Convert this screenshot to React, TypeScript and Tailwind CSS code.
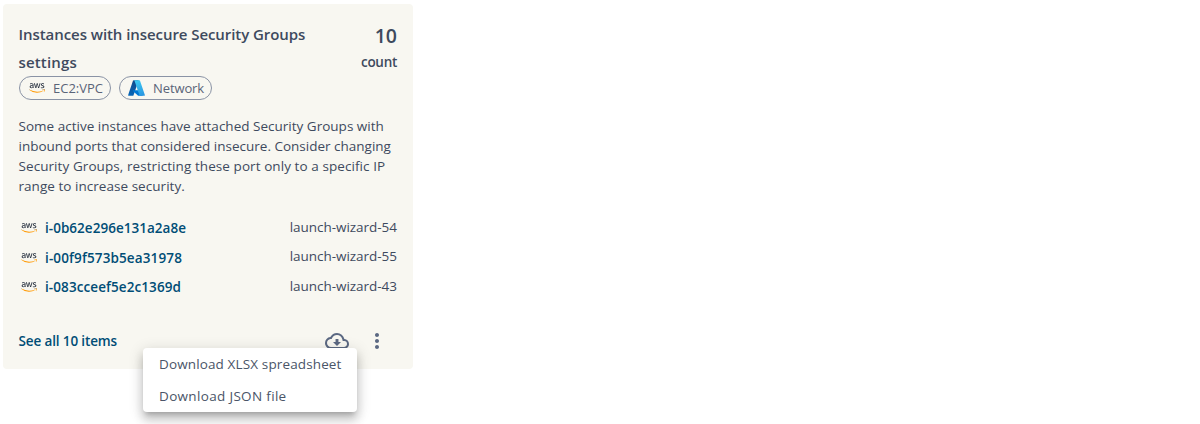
import { FaAws } from "react-icons/fa";
import { MdMoreVert, MdOutlineCloudDownload } from "react-icons/md";

function AwsLogo() {
  return (
    <span className="grid h-4 w-4 shrink-0">
      <FaAws className="col-start-1 row-start-1 size-4 text-[#252f3e] [clip-path:inset(0_0_41%_0)]" />
      <FaAws className="col-start-1 row-start-1 size-4 text-[#ff9900] [clip-path:inset(59%_0_0_0)]" />
    </span>
  );
}

function AzureLogo() {
  return (
    <svg className="h-4 w-[17px] shrink-0" viewBox="3 1 90 85" preserveAspectRatio="none">
      <defs>
        <linearGradient id="az-left" x1="45" y1="7" x2="14" y2="91" gradientUnits="userSpaceOnUse">
          <stop offset="0" stopColor="#114a8b" />
          <stop offset="1" stopColor="#0669bc" />
        </linearGradient>
        <linearGradient id="az-right" x1="46" y1="4" x2="82" y2="90" gradientUnits="userSpaceOnUse">
          <stop offset="0" stopColor="#3ccbf4" />
          <stop offset="1" stopColor="#2892df" />
        </linearGradient>
      </defs>
      <path
        fill="url(#az-left)"
        d="M33.3 2h26.1L32.3 82.2a4.2 4.2 0 0 1-3.9 2.8H8.1a4.2 4.2 0 0 1-3.9-5.5L29.4 4.8A4.2 4.2 0 0 1 33.3 2z"
      />
      <path
        fill="#0078d4"
        d="M71.2 55.8H29.9a1.9 1.9 0 0 0-1.3 3.3l26.5 24.8a4.2 4.2 0 0 0 2.8 1.1h23.4z"
      />
      <path
        fill="url(#az-right)"
        d="M66.6 4.8A4.2 4.2 0 0 0 62.7 2H33.6a4.2 4.2 0 0 1 3.9 2.8l25.2 74.7a4.2 4.2 0 0 1-3.9 5.5h29.1a4.2 4.2 0 0 0 3.9-5.5z"
      />
    </svg>
  );
}

const instances = [
  { id: "i-0b62e296e131a2a8e", group: "launch-wizard-54", tracking: "tracking-[0.03px]" },
  { id: "i-00f9f573b5ea31978", group: "launch-wizard-55", tracking: "tracking-[0.13px]" },
  { id: "i-083cceef5e2c1369d", group: "launch-wizard-43", tracking: "tracking-[0.09px]" },
];

export default function App() {
  return (
    <div className="h-[424px] overflow-hidden bg-white pt-1 pl-[3px] font-['Open_Sans','Noto_Sans',sans-serif] text-[13.5px] text-[#3e4a5e]">
      <div className="relative flex h-[365px] w-[410px] flex-col rounded bg-[#f8f7f1] pt-4 pr-4 pl-[15.5px]">
        <div className="flex h-14 justify-between">
          <h2 className="text-[15px] leading-7 font-semibold">
            <span className="block tracking-[-0.065px] whitespace-nowrap">
              Instances with insecure Security Groups
            </span>
            <span className="block tracking-[0.15px]">settings</span>
          </h2>
          <div className="text-right font-semibold">
            <div className="pt-0.5 text-[19.5px] leading-7">10</div>
            <div className="text-[13.5px] leading-[25px] tracking-[-0.28px]">count</div>
          </div>
        </div>

        <div className="flex gap-2 pl-[0.5px] text-[13px] text-[#5a6478]">
          <span className="flex h-6 w-[92px] items-center gap-2 rounded-full border border-[#8a93a5] pl-[9px]">
            <AwsLogo />
            <span className="leading-5">EC2:VPC</span>
          </span>
          <span className="flex h-6 w-[93px] items-center gap-2 rounded-full border border-[#8a93a5] pl-2">
            <AzureLogo />
            <span className="leading-5 tracking-[-0.1px]">Network</span>
          </span>
        </div>

        <p className="mt-4 leading-5 whitespace-nowrap">
          <span className="block tracking-[0.01px]">
            Some active instances have attached Security Groups with
          </span>
          <span className="block">inbound ports that considered insecure. Consider changing</span>
          <span className="block tracking-[0.075px]">
            Security Groups, restricting these port only to a specific IP
          </span>
          <span className="block tracking-[0.04px]">range to increase security.</span>
        </p>

        <ul className="mt-[17px] pl-[0.5px]">
          {instances.map((item) => (
            <li key={item.id} className="flex h-[29.5px] items-start justify-between">
              <span className="flex items-start gap-2 pl-0.5">
                <span className="pt-[7px]">
                  <AwsLogo />
                </span>
                <a className={`pt-[5px] leading-5 font-semibold text-[#004d76] ${item.tracking}`}>
                  {item.id}
                </a>
              </span>
              <span className="pt-[3.9px] leading-5 tracking-[-0.03px]">{item.group}</span>
            </li>
          ))}
        </ul>

        <div className="mt-[19px] flex h-10 items-center justify-between">
          <a className="pt-0.5 font-semibold tracking-[-0.13px] text-[#004d76]">See all 10 items</a>
          <span className="flex gap-4 pr-2 text-[#5b6882]">
            <MdOutlineCloudDownload className="size-6" />
            <MdMoreVert className="size-6" />
          </span>
        </div>

        <div className="absolute top-[344px] left-[140px] h-16 w-[214px] rounded bg-white pl-4 leading-8 whitespace-nowrap text-[#4a5568] shadow-[0_5px_5px_-3px_rgba(0,0,0,0.2),0_8px_10px_1px_rgba(0,0,0,0.14),0_3px_14px_2px_rgba(0,0,0,0.12)]">
          <div className="tracking-[0.13px]">Download XLSX spreadsheet</div>
          <div className="tracking-[0.33px]">Download JSON file</div>
        </div>
      </div>
    </div>
  );
}
